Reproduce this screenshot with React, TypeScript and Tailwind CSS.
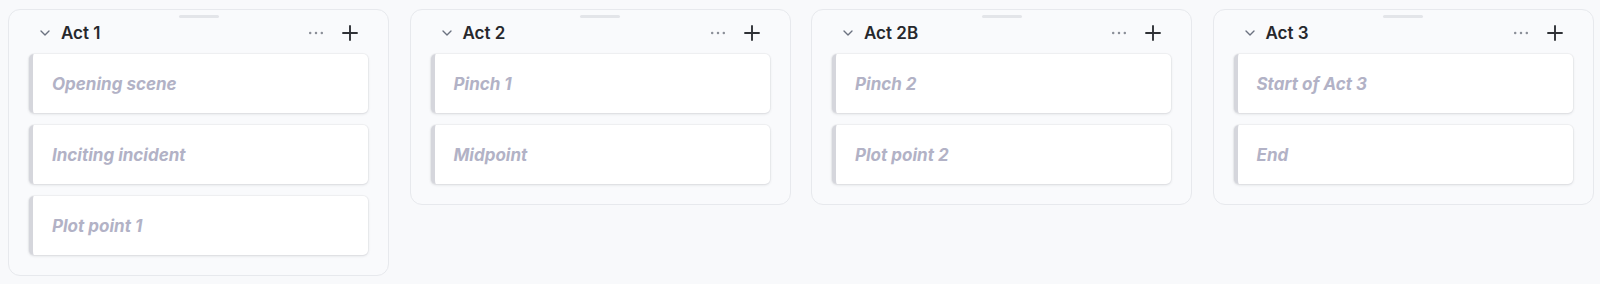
import React from "react";

const acts = [
  { title: "Act 1", items: ["Opening scene", "Inciting incident", "Plot point 1"] },
  { title: "Act 2", items: ["Pinch 1", "Midpoint"] },
  { title: "Act 2B", items: ["Pinch 2", "Plot point 2"] },
  { title: "Act 3", items: ["Start of Act 3", "End"] },
];

function Chevron() {
  return (
    <svg width="16" height="16" viewBox="0 0 24 24" fill="none" stroke="#6b7280" strokeWidth="2" strokeLinecap="round" strokeLinejoin="round">
      <path d="m6 9 6 6 6-6" />
    </svg>
  );
}

function Dots() {
  return (
    <svg width="20" height="20" viewBox="0 0 24 24" fill="#8b8f98" stroke="none">
      <circle cx="5" cy="12" r="1.5" />
      <circle cx="12" cy="12" r="1.5" />
      <circle cx="19" cy="12" r="1.5" />
    </svg>
  );
}

function Plus() {
  return (
    <svg width="24" height="24" viewBox="0 0 24 24" fill="none" stroke="#2f3136" strokeWidth="1.9" strokeLinecap="round" strokeLinejoin="round">
      <path d="M5 12h14" />
      <path d="M12 5v14" />
    </svg>
  );
}

export default function App() {
  return (
    <div
      className="w-[1600px] h-[284px] bg-[#f8f9fb] flex items-start gap-[20.5px] pl-2 pt-[9px]"
      style={{ fontFamily: "Inter, 'Noto Sans', sans-serif" }}
    >
      {acts.map((act) => (
        <div
          key={act.title}
          className="w-[381px] shrink-0 rounded-xl border border-[#e7e9ed] bg-[#f9fafc] pt-[5px] pb-5 flex flex-col"
        >
          <div className="h-[3px] w-10 mx-auto rounded-full bg-[#e3e5e9]" />
          <div className="h-[30px] flex items-center pl-7 pr-[26px]">
            <Chevron />
            <span className="ml-2 text-[17px] font-semibold text-[#27282c] leading-none">{act.title}</span>
            <div className="ml-auto flex items-center gap-3">
              <Dots />
              <Plus />
            </div>
          </div>
          <div className="mt-[6px] px-5 flex flex-col gap-3">
            {act.items.map((it) => (
              <div
                key={it}
                className="h-[59px] rounded-[5px] bg-white border-l-4 border-[#d5d6dc] shadow-[0_1px_3px_rgba(16,24,40,0.12),0_0_0_1px_rgba(16,24,40,0.03)] flex items-center pl-[19px]"
              >
                <span className="text-[17px] font-bold italic text-[#b2b2c6] leading-none pt-px">{it}</span>
              </div>
            ))}
          </div>
        </div>
      ))}
    </div>
  );
}
